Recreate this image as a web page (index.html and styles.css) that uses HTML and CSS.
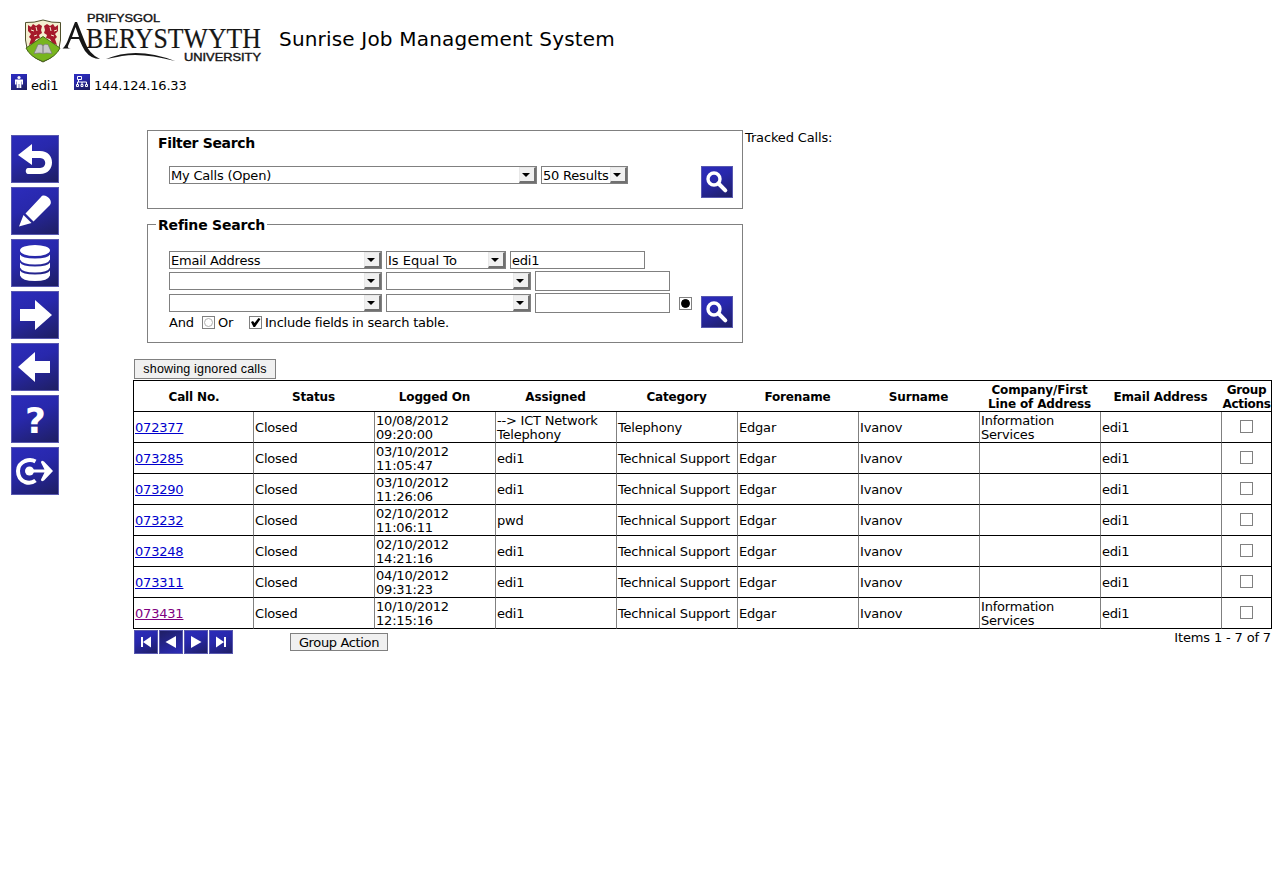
FILE: index.html
```
<!DOCTYPE html>
<html lang="en">
<head>
<meta charset="utf-8">
<title>Sunrise Job Management System</title>
<link rel="stylesheet" href="styles.css">
</head>
<body>
<svg class="defs" width="0" height="0" aria-hidden="true">
  <defs>
    <linearGradient id="blue" x1="0.3" y1="0" x2="0.7" y2="1"><stop offset="0" stop-color="#2c2cbc"/><stop offset="0.35" stop-color="#2828ac"/><stop offset="1" stop-color="#1e1e60"/></linearGradient>
    <symbol id="search" viewBox="0 0 32 32"><circle cx="13" cy="13" r="6" fill="none" stroke="#fff" stroke-width="3.400"/><path d="M17.500 17.500l6.800 6.800" stroke="#fff" stroke-width="4" stroke-linecap="round"/></symbol>
  </defs>
</svg>
<header class="header">
  <svg class="logo" width="240" height="54" viewBox="24 11 240 54">
    <path d="M25.500 22.500Q34 23 43 20Q52 23 60.500 22.500V40Q60 55 43 62Q26 55 25.500 40Z" fill="#f4efd0" stroke="#50502c" stroke-width="1"/>
    <path d="M28 25l3 2 2-3 3 2 3-2 3 2-1 4 1 3-3 2 1 3-4 1-2 4-5 2 2-6-2-2 2-3-3-3zM58 25l-3 2-2-3-3 2-3-2-3 2 1 4-1 3 3 2-1 3 4 1 2 4 5 2-2-6 2-2-2-3 3-3z" fill="#a6192b"/>
    <path d="M31 30l3 1M36 27l1 4M50 27l1 4M54 31l3-1M34 36l3-1M51 35l3 1" stroke="#f4efd0" stroke-width="1"/>
    <path d="M43 36.500L60 48Q56 57 43 61.500Q30 57 26 48Z" fill="#78b51e" stroke="#47651b" stroke-width="1"/>
    <path d="M38 44.500q3-1 5 1q2-2 5-1l4 9q-6-1-9 0q-3-1-9 0z" fill="#c8c8c8" stroke="#777" stroke-width=".7"/><path d="M43 45v8" stroke="#777"/>
    <text class="serif" x="86" y="48" font-size="30" textLength="175" lengthAdjust="spacingAndGlyphs">BERYSTWYTH</text>
    <path d="M62.500 48.500Q66 46 69 37L75 22H77L85 42Q89 54 100 59Q91 59 85 51Q82 46 79 39H71L68 46Q67 48 71 48.500ZM72 37H79L75.500 27Z" fill="#161616" fill-rule="evenodd"/>
    <path d="M106 59Q136 46 175 61Q143 52.500 122 56Q112 58 106 59Z" fill="#161616"/>
    <text class="sans" x="87" y="22" font-size="10.500" textLength="73" lengthAdjust="spacingAndGlyphs">PRIFYSGOL</text>
    <text class="sans" x="184" y="61" font-size="10.500" textLength="77" lengthAdjust="spacingAndGlyphs">UNIVERSITY</text>
  </svg>
  <h1 class="title">Sunrise Job Management System</h1>
</header>
<div class="userbar">
  <svg class="ico" width="16" height="16" viewBox="0 0 16 16"><rect width="16" height="16" fill="url(#blue)"/><circle cx="8" cy="3.500" r="1.600" fill="#fff"/><path d="M4 5.500h8v5h-1.300V7.500h-.4v6.500H8.300v-4h-.6v4H5.700V7.500h-.4v3H4z" fill="#fff"/></svg>
  <span class="user">edi1</span>
  <svg class="ico" width="16" height="16" viewBox="0 0 16 16"><rect width="16" height="16" fill="url(#blue)"/><path d="M3.500 2.500h4v3h-4zM2.500 10.500h2v2h-2zM7 10.500h2v2H7zM11.500 10.500h2v2h-2zM4.500 5.500v2.500M3.500 10.500V8h9v2.500M8 8v2.500" fill="none" stroke="#fff"/></svg>
  <span class="ip">144.124.16.33</span>
</div>
<div class="layout">
  <nav class="sidebar">
    <svg class="btn" viewBox="0 0 48 48"><path d="M7 20L21 9v7h8c16 0 16 23 0 23H17c-3 0-3-6 0-6h12c7 0 7-10 0-10h-8v7z" fill="#fff"/></svg>
    <svg class="btn" viewBox="0 0 48 48"><path d="M14.500 26.500L30 10c3-5 13 3 9 8L22.500 34.500zM12.500 28l8 8L8 39.500z" fill="#fff"/></svg>
    <svg class="btn" viewBox="0 0 48 48"><ellipse cx="24" cy="11.500" rx="15" ry="5.500" fill="#fff"/><path d="M9 15.500q2 4 15 4t15-4v5q-2 5-15 5t-15-5zM9 23.500q2 4 15 4t15-4v5q-2 5-15 5t-15-5zM9 31.500q2 4 15 4t15-4v5q-2 5.500-15 5.500t-15-5.500z" fill="#fff"/></svg>
    <svg class="btn" viewBox="0 0 48 48"><path d="M9 18h15V9l17 15-17 15v-9H9z" fill="#fff"/></svg>
    <svg class="btn" viewBox="0 0 48 48"><path d="M39 18H24V9L7 24l17 15v-9h15z" fill="#fff"/></svg>
    <svg class="btn" viewBox="0 0 48 48"><text class="question" x="24.500" y="37.500" text-anchor="middle">?</text></svg>
    <svg class="btn" viewBox="0 0 48 48"><path d="M24.500 14.500Q20 12 14 14Q7 17 7 24Q7 32 14 35Q20 37 24.500 33.500" fill="none" stroke="#fff" stroke-width="4"/><circle cx="18.500" cy="24" r="4.500" fill="#fff"/><path d="M18 22.500h15.500L30 15.500q0-3 3-1L42 24l-9 9.500q-3 2-3-1l3.500-7H18z" fill="#fff"/></svg>
  </nav>
  <main class="content">
    <div class="searches">
      <div class="panels">
        <section class="panel filter">
          <h2 class="legend">Filter Search</h2>
          <div class="line">
            <div class="select w368"><span>My Calls (Open)</span><i class="arrow"></i></div>
            <div class="select w87"><span>50 Results</span><i class="arrow"></i></div>
          </div>
          <svg class="find find-top" viewBox="0 0 32 32"><use href="#search"/></svg>
        </section>
        <section class="panel refine">
          <h2 class="legend">Refine Search</h2>
          <div class="rows">
            <div class="line"><div class="select w213"><span>Email Address</span><i class="arrow"></i></div><div class="select w120"><span class="wide">Is Equal To</span><i class="arrow"></i></div><div class="input first">edi1</div></div>
            <div class="line second"><div class="select w213"><i class="arrow"></i></div><div class="select w145"><i class="arrow"></i></div><div class="input"></div></div>
            <div class="line third"><div class="select w213"><i class="arrow"></i></div><div class="select w145"><i class="arrow"></i></div><div class="input"></div><i class="radio on"></i></div>
            <div class="line options"><span class="and">And</span><i class="radio"></i><span class="or">Or</span><svg class="check" viewBox="0 0 13 13"><rect x=".5" y=".5" width="12" height="12" fill="#fff" stroke="#808080"/><path d="M2 6l2-1 1.500 2L9.500 2l2 1L6 11H4.500z"/></svg><span>Include fields in search table.</span></div>
          </div>
          <svg class="find find-bottom" viewBox="0 0 32 32"><use href="#search"/></svg>
        </section>
      </div>
      <div class="tracked">Tracked Calls:</div>
    </div>
    <button class="button ignored">showing ignored calls</button>
    <table class="calls">
      <colgroup><col class="c-first"><col span="8" class="c-mid"><col class="c-last"></colgroup>
      <thead><tr><th>Call No.</th><th>Status</th><th>Logged On</th><th>Assigned</th><th>Category</th><th>Forename</th><th>Surname</th><th>Company/First<br>Line of Address</th><th>Email Address</th><th>Group<br>Actions</th></tr></thead>
      <tbody>
        <tr><td><a href="#">072377</a></td><td>Closed</td><td>10/08/2012<br>09:20:00</td><td>--&gt; ICT Network<br>Telephony</td><td>Telephony</td><td>Edgar</td><td>Ivanov</td><td>Information<br>Services</td><td>edi1</td><td><i class="box"></i></td></tr>
        <tr><td><a href="#">073285</a></td><td>Closed</td><td>03/10/2012<br>11:05:47</td><td>edi1</td><td>Technical Support</td><td>Edgar</td><td>Ivanov</td><td></td><td>edi1</td><td><i class="box"></i></td></tr>
        <tr><td><a href="#">073290</a></td><td>Closed</td><td>03/10/2012<br>11:26:06</td><td>edi1</td><td>Technical Support</td><td>Edgar</td><td>Ivanov</td><td></td><td>edi1</td><td><i class="box"></i></td></tr>
        <tr><td><a href="#">073232</a></td><td>Closed</td><td>02/10/2012<br>11:06:11</td><td>pwd</td><td>Technical Support</td><td>Edgar</td><td>Ivanov</td><td></td><td>edi1</td><td><i class="box"></i></td></tr>
        <tr><td><a href="#">073248</a></td><td>Closed</td><td>02/10/2012<br>14:21:16</td><td>edi1</td><td>Technical Support</td><td>Edgar</td><td>Ivanov</td><td></td><td>edi1</td><td><i class="box"></i></td></tr>
        <tr><td><a href="#">073311</a></td><td>Closed</td><td>04/10/2012<br>09:31:23</td><td>edi1</td><td>Technical Support</td><td>Edgar</td><td>Ivanov</td><td></td><td>edi1</td><td><i class="box"></i></td></tr>
        <tr><td><a href="#" class="visited">073431</a></td><td>Closed</td><td>10/10/2012<br>12:15:16</td><td>edi1</td><td>Technical Support</td><td>Edgar</td><td>Ivanov</td><td>Information<br>Services</td><td>edi1</td><td><i class="box"></i></td></tr>
      </tbody>
    </table>
    <footer class="footer">
      <div class="pager">
        <svg class="page" viewBox="0 0 24 24"><path d="M7 7h2v10H7zM17 6.500v11L9 12z" fill="#fff"/></svg>
        <svg class="page current" viewBox="0 0 24 24"><path d="M17 6v12L6.500 12z" fill="#fff"/></svg>
        <svg class="page" viewBox="0 0 24 24"><path d="M7 6v12L17.500 12z" fill="#fff"/></svg>
        <svg class="page" viewBox="0 0 24 24"><path d="M15 7h2v10h-2zM7 6.500v11L15 12z" fill="#fff"/></svg>
      </div>
      <button class="button group">Group Action</button>
      <div class="count">Items 1 - 7 of 7</div>
    </footer>
  </main>
</div>
</body>
</html>
```
FILE: styles.css
```
* { box-sizing: border-box; }
body { margin: 0; background: #fff; color: #000; font: 13px/16px Verdana, "DejaVu Sans", sans-serif; letter-spacing: -.2px; }
.defs { display: block; height: 0; }
.header { display: flex; height: 74px; padding: 11px 0 0 24px; }
.logo { flex: none; overflow: visible; letter-spacing: 0; }
.serif { font-family: "Liberation Serif", serif; fill: #161616; stroke: #161616; stroke-width: .2px; }
.sans { font-family: "Liberation Sans", sans-serif; fill: #161616; stroke: #161616; stroke-width: .4px; }
.title { margin: 15px 0 0 15px; font-size: 20px; line-height: 26px; font-weight: 400; letter-spacing: .18px; white-space: nowrap; }
.userbar { display: flex; height: 61px; padding-left: 11px; }
.ico { flex: none; }
.user, .ip { margin: 4px 0 0 4px; }
.user { width: 43px; }
.layout { display: flex; padding-left: 11px; }
.sidebar { display: flex; flex-direction: column; gap: 4px; width: 122px; }
.btn, .find, .page { display: block; background: linear-gradient(155deg, #2c2cbc 0%, #2828ac 40%, #1e1e60 100%); box-shadow: inset 0 0 0 1px #5858b0; }
.btn { width: 48px; height: 48px; }
.question { font: bold 36px "DejaVu Sans", sans-serif; letter-spacing: 0; fill: #fff; }
.content { width: 1139px; margin-top: -5px; }
.searches { display: flex; height: 229px; }
.panels { width: 596px; margin-left: 14px; }
.panel { display: flex; justify-content: space-between; position: relative; border: 1px solid #808080; padding: 0 9px 0 21px; }
.filter { height: 79px; padding-top: 35px; }
.refine { height: 119px; margin-top: 15px; padding-top: 25px; }
.legend { position: absolute; left: 8px; top: 3px; margin: 0; padding: 0 2px; background: #fff; font-size: 14px; letter-spacing: -.35px; line-height: 18px; white-space: nowrap; }
.refine .legend { top: -9px; letter-spacing: -.2px; }
.find { width: 32px; height: 32px; }
.find-bottom { margin-top: 46px; }
.line { display: flex; gap: 4px; align-items: flex-start; }
.select { display: flex; justify-content: space-between; height: 18px; border: 1px solid #808080; padding-left: 1px; line-height: 17px; white-space: nowrap; background: #fff; }
.wide { letter-spacing: 0; }
.w368 { width: 368px; } .w87 { width: 87px; } .w213 { width: 213px; } .w120 { width: 120px; } .w145 { width: 145px; }
.arrow { display: flex; flex: none; width: 17px; height: 16px; margin-left: auto; background: #f0f0f0; border: solid; border-width: 1px 2px 2px 1px; border-color: #e8e8e8 #707070 #707070 #e8e8e8; align-items: center; justify-content: center; }
.arrow::after { content: ""; margin-right: 2px; border: solid transparent; border-width: 4px 4px 0; border-top-color: #000; }
.input { width: 135px; height: 20px; border: 1px solid #808080; padding-left: 1px; line-height: 17px; }
.input.first { height: 18px; }
.rows { padding-top: 1px; }
.second, .third { height: 22px; align-items: center; }
.second { margin-top: 1px; }
.radio { display: flex; align-items: center; justify-content: center; width: 13px; height: 13px; border: 1px solid #808080; }
.radio::after { content: ""; width: 7px; height: 7px; border: 1px solid #b0b0b0; border-radius: 50%; }
.radio.on { margin-left: 5px; }
.radio.on::after { background: #000; border-color: #000; }
.options { align-items: center; height: 17px; gap: 3px; white-space: nowrap; }
.options span { padding-top: 1px; letter-spacing: -.22px; }
.and { width: 30px; } .or { width: 28px; }
.check { width: 13px; height: 13px; }
.tracked { margin: 0 0 0 2px; letter-spacing: -.15px; }
.button { display: block; margin: 0; padding: 0; border: 1px solid #808080; border-radius: 0; background: #f0f0f0; color: #000; text-align: center; white-space: nowrap; }
.ignored { width: 142px; height: 20px; margin-left: 1px; font: 12.500px "Liberation Sans", sans-serif; letter-spacing: .18px; }
.calls { width: 1139px; margin-top: 1px; table-layout: fixed; border-collapse: separate; border-spacing: 0; border: solid #000; border-width: 1px 0 0 1px; line-height: 14px; }
.c-first { width: 120px; } .c-mid { width: 121px; } .c-last { width: 50px; }
.calls th, .calls td { height: 31px; padding: 1px 0 0 1px; border-bottom: 1px solid #000; white-space: nowrap; vertical-align: middle; }
.calls th { padding: 1px 2px 0 0; font-size: 12px; letter-spacing: -.15px; }
.calls th:first-child, .calls th:last-child { padding-right: 0; }
.calls th:last-child { letter-spacing: -.3px; }
.calls td { border-right: 1px solid #808080; }
.calls th:last-child, .calls td:last-child { border-right: 1px solid #000; }
.calls a { color: #0000cc; }
.calls a.visited { color: #800080; }
.box { display: block; width: 13px; height: 13px; margin: -3px 0 0 17px; border: 1px solid #808080; }
.footer { display: flex; padding: 1px 0 0 1px; }
.pager { display: flex; gap: 1px; width: 156px; }
.page { width: 24px; height: 24px; }
.current { background: linear-gradient(335deg, #2c2cbc, #1e1e60); }
.group { width: 98px; height: 18px; margin-top: 3px; font: 13px/15px Verdana, "DejaVu Sans", sans-serif; letter-spacing: -.35px; }
.count { margin: 0 1px 0 auto; letter-spacing: -.15px; }
```
